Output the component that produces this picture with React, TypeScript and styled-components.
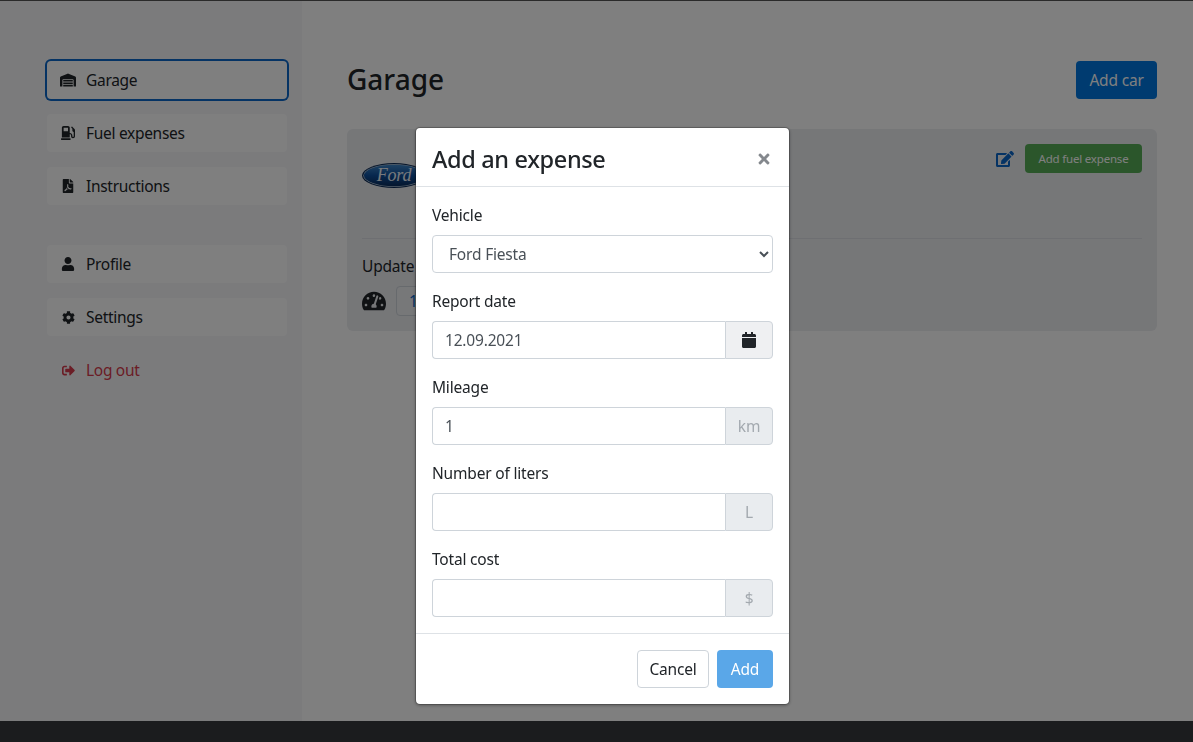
import { ReactNode } from 'react';
import { FaWarehouse, FaGasPump, FaFilePdf, FaUser, FaCog, FaSignOutAlt, FaTachometerAlt, FaEdit, FaCalendar, FaTimes } from 'react-icons/fa';
import styled, { createGlobalStyle } from 'styled-components';

const GlobalStyle = createGlobalStyle`
  html, body {
    margin: 0;
    padding: 0;
    height: 100%;
    overflow: hidden;
  }
  body {
    font-family: "Noto Sans", "Open Sans", sans-serif;
    font-size: 15.5px;
    letter-spacing: -0.012em;
    color: #212529;
    background: #fff;
  }
  * {
    box-sizing: border-box;
  }
`;

const Page = styled.div`
  height: 742px;
  display: flex;
  flex-direction: column;
  border-top: 1px solid #555;
`;

const Content = styled.div`
  flex: 1;
  display: flex;
  min-height: 0;
`;

const Footer = styled.footer`
  height: 21px;
  background: #36383c;
`;

const Sidebar = styled.aside`
  width: 302px;
  background: #f7f7f8;
  padding: 60px 15px 0 47px;
`;

const SideNav = styled.nav`
  display: flex;
  flex-direction: column;
  gap: 15px;
`;

const SideSpacer = styled.div`
  height: 10px;
`;

const SideItem = styled.a<{ $focused?: boolean; $danger?: boolean }>`
  height: 38px;
  display: flex;
  align-items: center;
  padding-left: 13px;
  gap: 10px;
  border-radius: 4px;
  letter-spacing: -0.3px;
  background: ${(p) => (p.$danger ? 'transparent' : '#ffffff')};
  color: ${(p) => (p.$danger ? '#d63a4c' : '#212529')};
  box-shadow: ${(p) => (p.$focused ? '0 0 0 2px #0b66c8' : 'none')};
`;

const SideIcon = styled.span`
  width: 16px;
  display: flex;
  justify-content: center;
`;

const Main = styled.main`
  flex: 1;
  padding: 60px 36px 0 45px;
`;

const TitleRow = styled.div`
  display: flex;
  justify-content: space-between;
  align-items: flex-start;
  height: 38px;
  margin-bottom: 30px;
`;

const PageTitle = styled.h1`
  margin: 0;
  font-size: 28px;
  font-weight: 500;
  line-height: 36px;
  letter-spacing: 0;
`;

const PrimaryButton = styled.button`
  width: 81px;
  height: 38px;
  border: none;
  border-radius: 4px;
  background: #0076e0;
  color: #fff;
  font: inherit;
  letter-spacing: inherit;
`;

const Card = styled.section`
  height: 202px;
  padding: 15px;
  border-radius: 6px;
  background: #eceef1;
`;

const CardTop = styled.div`
  height: 95px;
  display: flex;
  justify-content: space-between;
  align-items: flex-start;
  border-bottom: 1px solid #dcdfe4;
`;

const Actions = styled.div`
  display: flex;
  align-items: center;
  gap: 11px;
`;

const EditIcon = styled(FaEdit)`
  font-size: 18px;
  color: #0a66c8;
`;

const FuelButton = styled.button`
  width: 117px;
  height: 29px;
  border: none;
  border-radius: 4px;
  background: #57ad57;
  color: #fff;
  font: inherit;
  font-size: 11.5px;
  letter-spacing: inherit;
`;

const LogoBox = styled.svg`
  margin-top: 19px;
  display: block;
`;

const UpdateLabel = styled.div`
  margin-top: 15px;
  line-height: 24px;
`;

const MileageRow = styled.div`
  display: flex;
  align-items: center;
  gap: 10px;
  margin-top: 8px;
`;

const Gauge = styled(FaTachometerAlt)`
  font-size: 24px;
  color: #212529;
`;

const SmallInput = styled.div`
  width: 120px;
  height: 30px;
  padding-left: 12px;
  line-height: 28px;
  border: 1px solid #ced4da;
  border-radius: 4px;
  background: #eef0f3;
  color: #0a66c8;
`;

const Backdrop = styled.div`
  position: fixed;
  inset: 0;
  background: rgba(0, 0, 0, 0.5);
`;

const ModalLayer = styled.div`
  position: fixed;
  inset: 0;
  display: flex;
  justify-content: center;
  align-items: flex-start;
  padding: 127px 0 0 12px;
`;

const Modal = styled.div`
  width: 375px;
  background: #fff;
  border: 1px solid rgba(0, 0, 0, 0.2);
  border-radius: 5px;
  background-clip: padding-box;
  box-shadow: 0 1px 3px rgba(0, 0, 0, 0.25);
`;

const ModalHeader = styled.header`
  display: flex;
  justify-content: space-between;
  align-items: center;
  height: 59px;
  padding: 3px 16px 0;
  border-bottom: 1px solid #dee2e6;
`;

const ModalTitle = styled.h2`
  margin: 0;
  font-size: 23.5px;
  font-weight: 500;
  letter-spacing: -0.015em;
  line-height: 26px;
`;

const CloseButton = styled.button`
  display: flex;
  padding: 0 1px 0 0;
  border: none;
  background: none;
  color: #84888d;
  font-size: 16px;
`;

const ModalBody = styled.div`
  display: flex;
  flex-direction: column;
  gap: 16px;
  padding: 16px;
`;

const Field = styled.div`
  display: flex;
  flex-direction: column;
  gap: 8px;
`;

const Label = styled.label`
  line-height: 24px;
`;

const Select = styled.select`
  height: 38px;
  width: 100%;
  padding: 0 8px 0 12px;
  border: 1px solid #ced4da;
  border-radius: 4px;
  background: #fff;
  color: #495057;
  font: inherit;
  letter-spacing: inherit;
`;

const InputGroup = styled.div`
  display: flex;
  height: 38px;
`;

const Input = styled.input`
  flex: 1;
  min-width: 0;
  padding: 0 12px;
  border: 1px solid #ced4da;
  border-right: none;
  border-radius: 4px 0 0 4px;
  color: #495057;
  font: inherit;
  letter-spacing: inherit;
  outline: none;
`;

const Addon = styled.span<{ $light?: boolean }>`
  width: 48px;
  display: flex;
  align-items: center;
  justify-content: center;
  border: 1px solid #ced4da;
  border-radius: 0 4px 4px 0;
  background: ${(p) => (p.$light ? '#eff0f2' : '#e9ecef')};
  color: ${(p) => (p.$light ? '#212529' : '#a3a9af')};
`;

const ModalFooter = styled.footer`
  display: flex;
  justify-content: flex-end;
  gap: 8px;
  padding: 16px;
  border-top: 1px solid #dee2e6;
`;

const CancelButton = styled.button`
  width: 72px;
  height: 38px;
  border: 1px solid #ced4da;
  border-radius: 4px;
  background: #fff;
  color: #212529;
  font: inherit;
  letter-spacing: inherit;
`;

const AddButton = styled.button`
  width: 56px;
  height: 38px;
  border: none;
  border-radius: 4px;
  background: #5aa7e8;
  color: #fff;
  font: inherit;
  letter-spacing: inherit;
`;

function FordLogo() {
  return (
    <LogoBox width="64" height="25" viewBox="0 0 64 25">
      <defs>
        <linearGradient id="oval" x1="0" y1="0" x2="0" y2="1">
          <stop offset="0" stopColor="#3f86c8" />
          <stop offset="0.5" stopColor="#0e4f9c" />
          <stop offset="1" stopColor="#0a2d5c" />
        </linearGradient>
      </defs>
      <ellipse cx="32" cy="12.5" rx="32" ry="12.5" fill="#0b2a55" />
      <ellipse cx="32" cy="12.5" rx="30.8" ry="11.4" fill="#a9bfd4" />
      <ellipse cx="32" cy="12.5" rx="30" ry="10.7" fill="url(#oval)" />
      <text x="32" y="18" textAnchor="middle" fontFamily="Liberation Serif, serif" fontStyle="italic" fontSize="18" fill="#eef3f8">
        Ford
      </text>
    </LogoBox>
  );
}

const topItems: { icon: ReactNode; label: string; focused?: boolean }[] = [
  { icon: <FaWarehouse size={16} />, label: 'Garage', focused: true },
  { icon: <FaGasPump size={14} />, label: 'Fuel expenses' },
  { icon: <FaFilePdf size={14} />, label: 'Instructions' },
];

const bottomItems: { icon: ReactNode; label: string; danger?: boolean }[] = [
  { icon: <FaUser size={14} />, label: 'Profile' },
  { icon: <FaCog size={13} />, label: 'Settings' },
  { icon: <FaSignOutAlt size={13} />, label: 'Log out', danger: true },
];

export default function App() {
  return (
    <>
      <GlobalStyle />
      <Page>
        <Content>
          <Sidebar>
            <SideNav>
              {topItems.map((item) => (
                <SideItem key={item.label} $focused={item.focused}>
                  <SideIcon>{item.icon}</SideIcon>
                  {item.label}
                </SideItem>
              ))}
              <SideSpacer />
              {bottomItems.map((item) => (
                <SideItem key={item.label} $danger={item.danger}>
                  <SideIcon>{item.icon}</SideIcon>
                  {item.label}
                </SideItem>
              ))}
            </SideNav>
          </Sidebar>
          <Main>
            <TitleRow>
              <PageTitle>Garage</PageTitle>
              <PrimaryButton>Add car</PrimaryButton>
            </TitleRow>
            <Card>
              <CardTop>
                <FordLogo />
                <Actions>
                  <EditIcon />
                  <FuelButton>Add fuel expense</FuelButton>
                </Actions>
              </CardTop>
              <UpdateLabel>Update mileage</UpdateLabel>
              <MileageRow>
                <Gauge />
                <SmallInput>1</SmallInput>
              </MileageRow>
            </Card>
          </Main>
        </Content>
        <Footer />
      </Page>
      <Backdrop />
      <ModalLayer>
        <Modal>
          <ModalHeader>
            <ModalTitle>Add an expense</ModalTitle>
            <CloseButton>
              <FaTimes />
            </CloseButton>
          </ModalHeader>
          <ModalBody>
            <Field>
              <Label>Vehicle</Label>
              <Select defaultValue="Ford Fiesta">
                <option>Ford Fiesta</option>
              </Select>
            </Field>
            <Field>
              <Label>Report date</Label>
              <InputGroup>
                <Input defaultValue="12.09.2021" />
                <Addon $light>
                  <FaCalendar size={16} />
                </Addon>
              </InputGroup>
            </Field>
            <Field>
              <Label>Mileage</Label>
              <InputGroup>
                <Input defaultValue="1" />
                <Addon>km</Addon>
              </InputGroup>
            </Field>
            <Field>
              <Label>Number of liters</Label>
              <InputGroup>
                <Input />
                <Addon>L</Addon>
              </InputGroup>
            </Field>
            <Field>
              <Label>Total cost</Label>
              <InputGroup>
                <Input />
                <Addon>$</Addon>
              </InputGroup>
            </Field>
          </ModalBody>
          <ModalFooter>
            <CancelButton>Cancel</CancelButton>
            <AddButton>Add</AddButton>
          </ModalFooter>
        </Modal>
      </ModalLayer>
    </>
  );
}
